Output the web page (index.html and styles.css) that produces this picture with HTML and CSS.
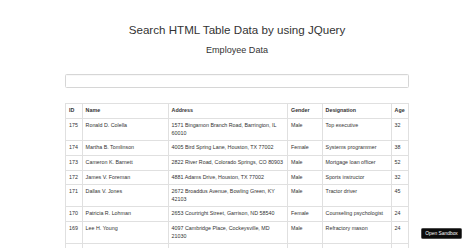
FILE: index.html
```html
<!DOCTYPE html>
<html lang="en">
<head>
<meta charset="utf-8">
<title>Search HTML Table Data by using JQuery</title>
<link rel="stylesheet" href="styles.css">
</head>
<body>
<div class="container">
  <h2 class="title">Search HTML Table Data by using JQuery</h2>
  <h3 class="subtitle">Employee Data</h3>
  <input type="text" class="search" id="search">
  <table class="data">
    <colgroup>
      <col class="c-id">
      <col class="c-name">
      <col class="c-address">
      <col class="c-gender">
      <col class="c-desig">
      <col class="c-age">
    </colgroup>
    <thead>
      <tr><th>ID</th><th>Name</th><th>Address</th><th>Gender</th><th>Designation</th><th>Age</th></tr>
    </thead>
    <tbody>
      <tr><td>175</td><td>Ronald D. Colella</td><td>1571 Bingamon Branch Road, Barrington, IL 60010</td><td>Male</td><td>Top executive</td><td>32</td></tr>
      <tr><td>174</td><td>Martha B. Tomlinson</td><td>4005 Bird Spring Lane, Houston, TX 77002</td><td>Female</td><td>Systems programmer</td><td>38</td></tr>
      <tr><td>173</td><td>Cameron K. Barnett</td><td>2822 River Road, Colorado Springs, CO 80903</td><td>Male</td><td>Mortgage loan officer</td><td>52</td></tr>
      <tr><td>172</td><td>James V. Foreman</td><td>4881 Adams Drive, Houston, TX 77002</td><td>Male</td><td>Sports instructor</td><td>32</td></tr>
      <tr><td>171</td><td>Dallas V. Jones</td><td>2672 Broaddus Avenue, Bowling Green, KY 42103</td><td>Male</td><td>Tractor driver</td><td>45</td></tr>
      <tr><td>170</td><td>Patricia R. Lohman</td><td>2653 Courtright Street, Garrison, ND 58540</td><td>Female</td><td>Counseling psychologist</td><td>24</td></tr>
      <tr><td>169</td><td>Lee H. Young</td><td>4097 Cambridge Place, Cockeysville, MD 21030</td><td>Male</td><td>Refractory mason</td><td>24</td></tr>
      <tr class="spacer-row"><td></td><td></td><td></td><td></td><td></td><td></td></tr>
    </tbody>
  </table>
</div>
<a class="sandbox-btn" href="#">Open Sandbox</a>
</body>
</html>
```

FILE: styles.css
```css
html, body {
  margin: 0;
  padding: 0;
  background: #fff;
}

body {
  font-family: "Liberation Sans", Arial, Helvetica, sans-serif;
  color: #333;
  font-size: 5.33px;
  line-height: 1.42857;
}

.container {
  width: 344px;
  margin: 0 auto;
  display: flex;
  flex-direction: column;
}

.title {
  margin: 23.6px 0 0;
  font-size: 11.6px;
  line-height: 12.8px;
  font-weight: 500;
  text-align: center;
  color: #333;
}

.subtitle {
  margin: 8.3px 0 0;
  font-size: 9.07px;
  line-height: 10px;
  font-weight: 500;
  text-align: center;
  color: #333;
}

.search {
  margin: 19.3px 0 0;
  box-sizing: border-box;
  width: 344px;
  height: 14px;
  padding: 2px 4px;
  border: 1px solid #d6d6d6;
  border-radius: 1.5px;
  background: #fff;
  box-shadow: inset 0 0.4px 0.4px rgba(0, 0, 0, 0.06);
  font-family: inherit;
  font-size: 5.33px;
  outline: none;
}

.data {
  margin-top: 15px;
  width: 100%;
  table-layout: fixed;
  border-collapse: collapse;
  border: 1px solid #e0e0e0;
}

.c-id { width: 16.6px; }
.c-name { width: 86px; }
.c-address { width: 119.4px; }
.c-gender { width: 34.6px; }
.c-desig { width: 69px; }
.c-age { width: auto; }

.data th,
.data td {
  padding: 3px;
  border: 1px solid #e0e0e0;
  text-align: left;
  vertical-align: top;
  line-height: 7.6px;
}

.data th {
  font-weight: bold;
  padding-top: 3.3px;
  padding-bottom: 3.3px;
}

.spacer-row td {
  height: 14px;
}

.sandbox-btn {
  position: fixed;
  right: 12px;
  bottom: 9px;
  box-sizing: border-box;
  width: 41px;
  height: 11.3px;
  display: flex;
  align-items: center;
  justify-content: center;
  background: #0b0b0b;
  border: 0.6px solid #4a4a4a;
  border-radius: 1.5px;
  color: #fff;
  font-size: 4.9px;
  text-decoration: none;
}
```
